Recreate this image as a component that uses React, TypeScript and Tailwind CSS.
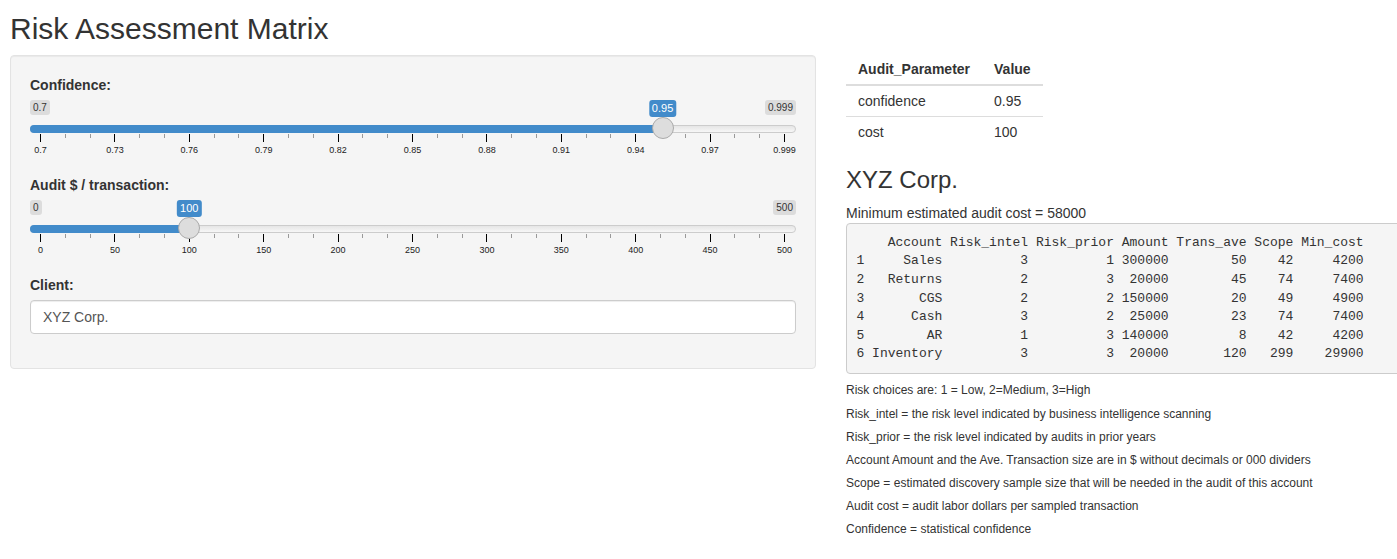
import React from 'react';

type SliderProps = {
  min: number;
  max: number;
  value: number;
  minLabel: string;
  maxLabel: string;
  valueLabel: string;
  ticks: string[];
};

// distance in px between first and last grid tick, and the left inset of the first one
const TRACK = 744;
const INSET = 10;

function Slider({ min, max, value, minLabel, maxLabel, valueLabel, ticks }: SliderProps) {
  const frac = (value - min) / (max - min);
  const center = INSET + 0.5 + frac * TRACK;

  const smalls: number[] = [];
  for (let k = 0; k < ticks.length - 1; k++) {
    smalls.push(k + 1 / 3, k + 2 / 3);
  }

  return (
    <div className="relative h-[60px] w-full">
      <span className="absolute left-0 top-0 rounded-[3px] bg-black/10 px-[3px] py-px text-[10px] leading-[1.333] text-[#333]">
        {minLabel}
      </span>
      <span className="absolute right-0 top-0 rounded-[3px] bg-black/10 px-[3px] py-px text-[10px] leading-[1.333] text-[#333]">
        {maxLabel}
      </span>

      {/* track */}
      <div className="absolute left-0 right-0 top-[25px] h-[8px] rounded-full border border-[#ccc] bg-[linear-gradient(to_bottom,#ddd_-50%,#fff_150%)]" />
      <div
        className="absolute left-0 top-[25px] h-[8px] rounded-l-full bg-[#428bca]"
        style={{ width: center }}
      />

      {/* grid */}
      {ticks.map((t, i) => {
        const x = INSET + (i / (ticks.length - 1)) * TRACK;
        return (
          <React.Fragment key={t}>
            <div className="absolute top-[34px] h-[8px] w-px bg-black" style={{ left: x }} />
            <span
              className="absolute top-[46px] -translate-x-1/2 whitespace-nowrap text-[9px] leading-[9px] text-[#222]"
              style={{ left: x + 0.5 }}
            >
              {t}
            </span>
          </React.Fragment>
        );
      })}
      {smalls.map((s) => (
        <div
          key={s}
          className="absolute top-[34px] h-[4px] w-px bg-[#999]"
          style={{ left: INSET + (s / (ticks.length - 1)) * TRACK }}
        />
      ))}

      {/* handle */}
      <div
        className="absolute top-[17px] h-[22px] w-[22px] rounded-full border border-[#aaa] bg-[#ddd]"
        style={{ left: center - 11 }}
      />
      <span
        className="absolute top-0 -translate-x-1/2 whitespace-nowrap rounded-[3px] bg-[#428bca] px-[3px] py-px text-[11px] leading-[1.333] text-white"
        style={{ left: center }}
      >
        {valueLabel}
      </span>
    </div>
  );
}

const printed = `    Account Risk_intel Risk_prior Amount Trans_ave Scope Min_cost
1     Sales          3          1 300000        50    42     4200
2   Returns          2          3  20000        45    74     7400
3       CGS          2          2 150000        20    49     4900
4      Cash          3          2  25000        23    74     7400
5        AR          1          3 140000         8    42     4200
6 Inventory          3          3  20000       120   299    29900`;

const notes = [
  'Risk choices are: 1 = Low, 2=Medium, 3=High',
  'Risk_intel = the risk level indicated by business intelligence scanning',
  'Risk_prior = the risk level indicated by audits in prior years',
  'Account Amount and the Ave. Transaction size are in $ without decimals or 000 dividers',
  'Scope = estimated discovery sample size that will be needed in the audit of this account',
  'Audit cost = audit labor dollars per sampled transaction',
  'Confidence = statistical confidence',
];

function App() {
  return (
    <div
      className="min-h-screen w-full overflow-hidden bg-white pl-[10px] pt-[12px] text-[14px] leading-[20px] text-[#333]"
      style={{ fontFamily: '"Liberation Sans", Arial, sans-serif' }}
    >
      <h2 className="mb-[10px] text-[30px] font-normal leading-[33px]">Risk Assessment Matrix</h2>

      <div className="flex items-start gap-[30px]">
        {/* Sidebar */}
        <div className="w-[806px] shrink-0 rounded-[4px] border border-[#e3e3e3] bg-[#f5f5f5] p-[19px] shadow-[inset_0_1px_1px_rgba(0,0,0,0.05)]">
          <div className="mb-[15px]">
            <label className="mb-[5px] block font-bold">Confidence:</label>
            <Slider
              min={0.7}
              max={0.999}
              value={0.95}
              minLabel="0.7"
              maxLabel="0.999"
              valueLabel="0.95"
              ticks={['0.7', '0.73', '0.76', '0.79', '0.82', '0.85', '0.88', '0.91', '0.94', '0.97', '0.999']}
            />
          </div>
          <div className="mb-[15px]">
            <label className="mb-[5px] block font-bold">Audit $ / transaction:</label>
            <Slider
              min={0}
              max={500}
              value={100}
              minLabel="0"
              maxLabel="500"
              valueLabel="100"
              ticks={['0', '50', '100', '150', '200', '250', '300', '350', '400', '450', '500']}
            />
          </div>
          <div className="mb-[15px]">
            <label className="mb-[5px] block font-bold">Client:</label>
            <input
              type="text"
              defaultValue="XYZ Corp."
              className="block h-[34px] w-full rounded-[4px] border border-[#ccc] bg-white px-[12px] py-[6px] text-[14px] text-[#555] shadow-[inset_0_1px_1px_rgba(0,0,0,0.075)] outline-none"
            />
          </div>
        </div>

        {/* Main panel */}
        <div className="w-[570px] shrink-0">
          <table className="-mt-px mb-[20px] border-collapse">
            <thead>
              <tr className="border-b-2 border-[#ddd]">
                <th className="px-[12px] py-[5px] text-left font-bold">Audit_Parameter</th>
                <th className="px-[12px] py-[5px] text-left font-bold">Value</th>
              </tr>
            </thead>
            <tbody>
              <tr className="border-b border-[#ddd]">
                <td className="px-[12px] py-[5px]">confidence</td>
                <td className="px-[12px] py-[5px]">0.95</td>
              </tr>
              <tr>
                <td className="px-[12px] py-[5px]">cost</td>
                <td className="px-[12px] py-[5px]">100</td>
              </tr>
            </tbody>
          </table>

          <h3 className="mb-[10px] text-[24px] font-normal leading-[1.1]">XYZ Corp.</h3>
          <div>Minimum estimated audit cost = 58000</div>
          <pre
            className="m-0 whitespace-pre rounded-[4px] border border-[#ccc] bg-[#f5f5f5] p-[9.5px] text-[13px] leading-[18.57px] text-[#333]"
            style={{ fontFamily: '"Liberation Mono", "Courier New", monospace' }}
          >
            {printed}
          </pre>

          <div className="pt-[10px]">
            {notes.map((n) => (
              <h6 key={n} className="mb-[10px] text-[12px] font-normal leading-[1.1]">
                {n}
              </h6>
            ))}
          </div>
        </div>
      </div>
    </div>
  );
}

export default App;
